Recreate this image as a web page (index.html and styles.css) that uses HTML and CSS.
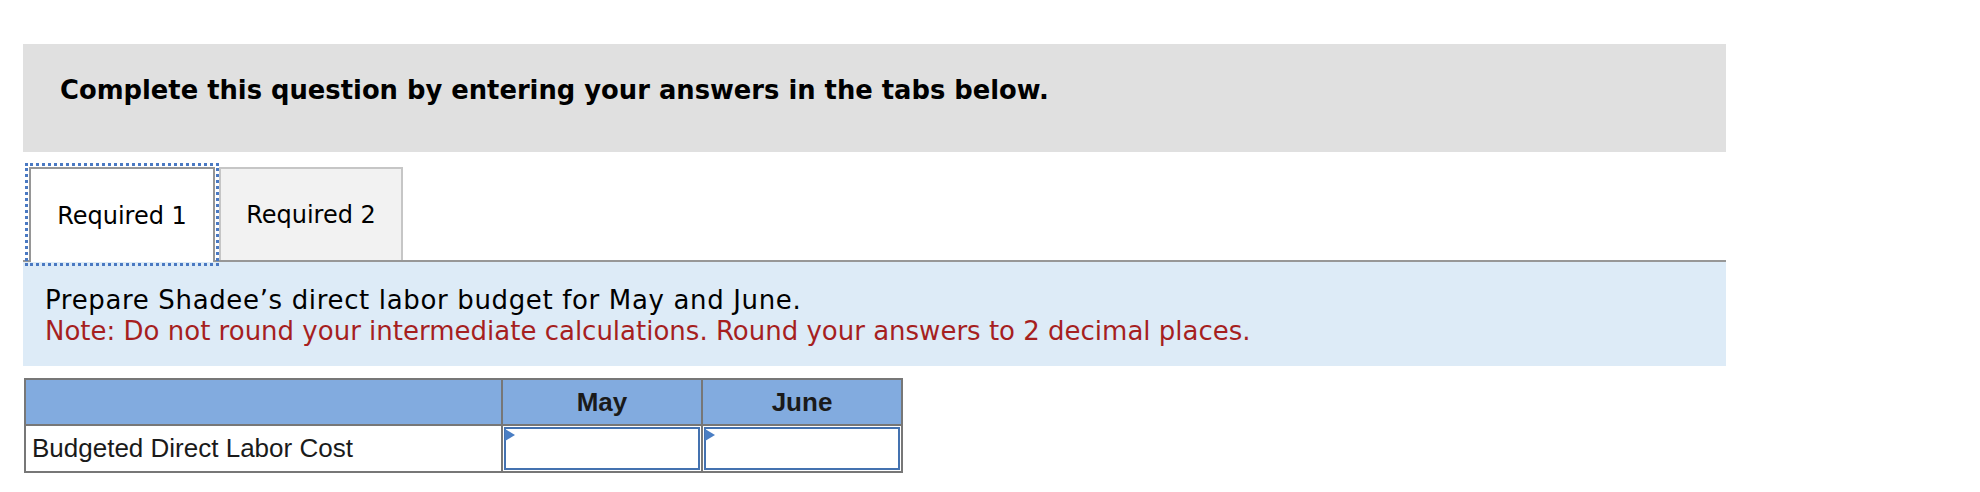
FILE: index.html
```html
<!DOCTYPE html>
<html lang="en">
<head>
<meta charset="utf-8">
<title>Direct labor budget</title>
<link rel="stylesheet" href="styles.css">
</head>
<body>
<div class="page">
  <div class="instructions">Complete this question by entering your answers in the tabs below.</div>
  <div class="tabs">
    <div class="tab tab-active">Required 1</div>
    <div class="tab tab-inactive">Required 2</div>
  </div>
  <div class="panel">
    <div class="prompt">Prepare Shadee’s direct labor budget for May and June.</div>
    <div class="note">Note: Do not round your intermediate calculations. Round your answers to 2 decimal places.</div>
  </div>
  <table class="grid">
    <thead>
      <tr>
        <th class="col-label"></th>
        <th class="col-month">May</th>
        <th class="col-month">June</th>
      </tr>
    </thead>
    <tbody>
      <tr>
        <td class="row-label">Budgeted Direct Labor Cost</td>
        <td class="cell-input"><div class="input-box"><span class="marker"></span></div></td>
        <td class="cell-input"><div class="input-box"><span class="marker"></span></div></td>
      </tr>
    </tbody>
  </table>
</div>
</body>
</html>
```

FILE: styles.css
```css
html, body {
  margin: 0;
  padding: 0;
  background: #ffffff;
}

.page {
  padding: 44px 0 0 23px;
  width: 1703px;
}

.instructions {
  height: 108px;
  background: #e0e0e0;
  padding: 31px 0 0 37px;
  box-sizing: border-box;
  font-family: "DejaVu Sans", Verdana, sans-serif;
  font-weight: bold;
  font-size: 25.8px;
  line-height: 30px;
  color: #000;
}

.tabs {
  display: flex;
  align-items: flex-end;
  gap: 4px;
  margin-top: 15px;
  padding-left: 6px;
}

.tab {
  box-sizing: border-box;
  display: flex;
  align-items: center;
  justify-content: center;
  font-family: "DejaVu Sans", Verdana, sans-serif;
  font-size: 24px;
  color: #000;
}

.tab-active {
  width: 186px;
  height: 95px;
  background: #ffffff;
  border: 2px solid #969696;
  border-bottom: none;
  margin-bottom: -2px;
  position: relative;
  z-index: 1;
  outline: 3px dotted #4a79c2;
  outline-offset: 1px;
}

.tab-inactive {
  width: 184px;
  height: 93px;
  background: #f2f2f2;
  border: 2px solid #c6c6c6;
  border-bottom: none;
}

.panel {
  border-top: 2px solid #979797;
  background: #ddebf7;
  height: 106px;
  box-sizing: border-box;
  padding: 23px 0 0 22px;
  font-family: "DejaVu Sans", Verdana, sans-serif;
  font-size: 26px;
  line-height: 31px;
}

.prompt {
  color: #000;
  letter-spacing: 0.65px;
}

.note {
  color: #a61f1f;
}

.grid {
  margin-top: 12px;
  margin-left: 1px;
  border-collapse: collapse;
  font-family: "Liberation Sans", Arial, sans-serif;
  font-size: 26px;
  color: #1a1a1a;
}

.grid th, .grid td {
  border: 2px solid #777777;
  padding: 0;
}

.grid thead th {
  background: #82abdf;
  height: 44px;
  font-weight: bold;
  text-align: center;
}

.col-label {
  width: 475px;
}

.col-month {
  width: 198px;
}

.row-label {
  height: 45px;
  padding-left: 6px !important;
  text-align: left;
}

.cell-input {
  padding: 1px !important;
}

.input-box {
  position: relative;
  box-sizing: border-box;
  height: 43px;
  border: 2px solid #4472b0;
  background: #fff;
}

.marker {
  position: absolute;
  left: -1px;
  top: 0;
  width: 0;
  height: 0;
  border-top: 6px solid transparent;
  border-bottom: 6px solid transparent;
  border-left: 10px solid #4a7ec4;
}
```
